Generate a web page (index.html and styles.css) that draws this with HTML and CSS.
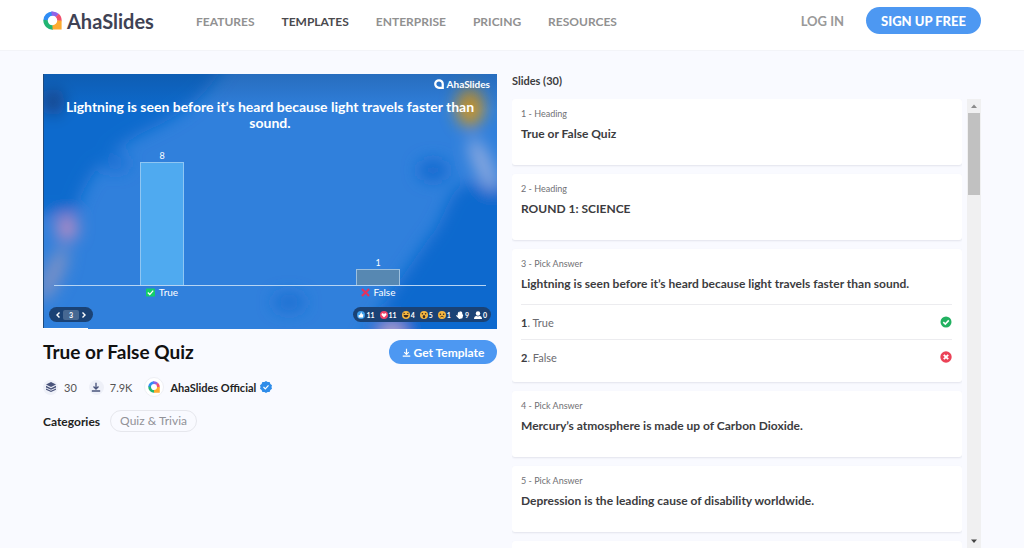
FILE: index.html
```html
<!DOCTYPE html>
<html lang="en">
<head>
<meta charset="utf-8">
<meta name="viewport" content="width=device-width, initial-scale=1">
<title>True or False Quiz - AhaSlides</title>
<link rel="stylesheet" href="styles.css">
</head>
<body>
<svg class="defs" aria-hidden="true">
  <symbol id="brand" viewBox="0 0 20 20">
    <path d="M10 2.700A7.300 7.300 0 0 0 2.700 10" stroke="#2f8df5" fill="none" stroke-width="4.600"/>
    <path d="M9 2.800A7.300 7.300 0 0 1 15.200 4.800" stroke="#8f63e8" fill="none" stroke-width="4.600"/>
    <path d="M15 4.600A7.300 7.300 0 0 1 17.300 10.500" stroke="#f0506e" fill="none" stroke-width="4.600"/>
    <path d="M2.700 9.500A7.300 7.300 0 0 0 10.500 17.300" stroke="#22b573" fill="none" stroke-width="4.600"/>
    <path d="M15 10H19.600V19.600H10V15A5 5 0 0 0 15 10Z" fill="#fdab2f"/>
  </symbol>
  <symbol id="download" viewBox="0 0 12 12">
    <path d="M6 1V8M3 5.500L6 8.500L9 5.500M1 10.800H11" fill="none" stroke="currentColor" stroke-width="1.600"/>
  </symbol>
</svg>

<header class="header">
  <a class="logo" href="#"><svg class="logo-mark" aria-hidden="true"><use href="#brand"/></svg>AhaSlides</a>
  <nav class="nav">
    <a href="#">FEATURES</a>
    <a href="#" class="active">TEMPLATES</a>
    <a href="#">ENTERPRISE</a>
    <a href="#">PRICING</a>
    <a href="#">RESOURCES</a>
  </nav>
  <div class="account">
    <a class="login" href="#">LOG IN</a>
    <button class="signup" type="button">SIGN UP FREE</button>
  </div>
</header>

<main class="main">
  <section class="template">
    <div class="preview">
      <svg class="backdrop" viewBox="0 0 454 255" preserveAspectRatio="none" aria-hidden="true">
        <defs>
          <filter id="soft" x="-50%" y="-50%" width="200%" height="200%"><feGaussianBlur stdDeviation="8"/></filter>
          <linearGradient id="shade" x1="0" y1="0" x2="0" y2="1"><stop offset="0" stop-color="#123c70" stop-opacity=".28"/><stop offset="1" stop-color="#123c70" stop-opacity="0"/></linearGradient>
        </defs>
        <rect width="454" height="255" fill="#3080dc"/>
        <g filter="url(#soft)">
          <path d="M-20-20H188C170 15 145 38 110 54C65 74 40 105 33 140H-20Z" fill="#096acd"/>
          <path d="M480 110H430C405 105 405 145 385 165C365 195 345 220 315 275H480Z" fill="#0b69ce"/>
          <ellipse cx="390" cy="96" rx="15" ry="11" fill="#126ad0"/>
          <ellipse cx="246" cy="228" rx="16" ry="9" fill="#1b70d2"/>
          <ellipse cx="73" cy="89" rx="13" ry="8" fill="#1c71d4"/>
          <ellipse cx="10" cy="28" rx="12" ry="14" fill="#18478e"/>
          <ellipse cx="427" cy="33" rx="14" ry="20" fill="#c8942a"/>
          <ellipse cx="440" cy="90" rx="9" ry="29" fill="#8aa8df" transform="rotate(-24 440 90)"/>
          <ellipse cx="24" cy="154" rx="11" ry="13" fill="#b08ac4"/>
          <ellipse cx="10" cy="200" rx="9" ry="30" fill="#7b91c6" transform="rotate(25 10 200)"/>
          <ellipse cx="349" cy="259" rx="13" ry="11" fill="#b4a4cc"/>
        </g>
        <rect width="454" height="36" fill="url(#shade)"/>
        <rect width="1" height="255" fill="#204a7c"/>
      </svg>
      <div class="slide">
        <div class="slide-brand">
          <svg viewBox="0 0 20 20" aria-hidden="true"><path d="M17.500 17.500H10A7.500 7.500 0 1 1 17.500 10Z" fill="none" stroke="#fff" stroke-width="4.500"/></svg>AhaSlides
        </div>
        <h2 class="question">Lightning is seen before it’s heard because light travels faster than sound.</h2>
        <div class="chart">
          <div class="column"><span>8</span><div class="bar bar-true"></div></div>
          <div class="column"><span>1</span><div class="bar bar-false"></div></div>
        </div>
        <div class="labels">
          <span><svg viewBox="0 0 10 10" aria-hidden="true"><rect y=".5" width="10" height="9" rx="1" fill="#13ce68"/><path d="M2 5L4.200 7.200L8 3" fill="none" stroke="#fff" stroke-width="1.400"/></svg>True</span>
          <span><svg viewBox="0 0 10 10" aria-hidden="true"><path d="M1 1L9 9M9 1L1 9" stroke="#e2335f" stroke-width="2.400"/></svg>False</span>
        </div>
        <div class="controls">
          <div class="pill pager">
            <button type="button" aria-label="Previous slide"><svg viewBox="0 0 6 8"><path d="M4.500 1.500L2 4L4.500 6.500" fill="none" stroke="#fff" stroke-width="1.400"/></svg></button>
            <span class="page">3</span>
            <button type="button" aria-label="Next slide"><svg viewBox="0 0 6 8"><path d="M1.500 1.500L4 4L1.500 6.500" fill="none" stroke="#fff" stroke-width="1.400"/></svg></button>
          </div>
          <div class="pill reactions">
            <span><svg viewBox="0 0 10 10"><circle cx="5" cy="5" r="5" fill="#3b9cea"/><path d="M2 5H3.500L5 2H6V4H8L7.500 8H2Z" fill="#fff"/></svg>11</span>
            <span><svg viewBox="0 0 10 10"><circle cx="5" cy="5" r="5" fill="#ed4269"/><path d="M5 8L2 5C1.400 3 4 2 5 4C6 2 8.600 3 8 5Z" fill="#fff"/></svg>11</span>
            <span><svg viewBox="0 0 10 10"><circle cx="5" cy="5" r="5" fill="#f4b63f"/><path d="M2 5H8C8 9 2 9 2 5ZM2 2L4 3.200L2 4M8 2L6 3.200L8 4" fill="#3b2a20"/></svg>4</span>
            <span><svg viewBox="0 0 10 10"><circle cx="5" cy="5" r="5" fill="#f4b63f"/><ellipse cx="5" cy="7" rx="1.500" ry="2" fill="#3b2a20"/><circle cx="3" cy="3.500" r="1" fill="#3b2a20"/><circle cx="7" cy="3.500" r="1" fill="#3b2a20"/></svg>5</span>
            <span><svg viewBox="0 0 10 10"><circle cx="5" cy="5" r="5" fill="#f4b63f"/><path d="M3 7.500Q5 5.500 7 7.500" fill="none" stroke="#3b2a20"/><circle cx="3" cy="4" r="1" fill="#3b2a20"/><circle cx="7" cy="4" r="1" fill="#3b2a20"/></svg>1</span>
            <span class="tight"><svg viewBox="0 0 10 10"><path d="M2 4L3 1L4 2L5 0L6 1L7.500 1L8 4L9 5L8 9L4 10L0 6L1 5L2.500 6Z" fill="#fff"/></svg>9</span>
            <span class="tight"><svg viewBox="0 0 10 10"><circle cx="5" cy="3" r="2.800" fill="#fff"/><path d="M0 10C0 6 3 5.500 5 7C7 5.500 10 6 10 10Z" fill="#fff"/></svg>0</span>
          </div>
        </div>
        <div class="progress"></div>
      </div>
    </div>

    <div class="title-row">
      <h1>True or False Quiz</h1>
      <button class="get" type="button"><svg aria-hidden="true"><use href="#download"/></svg>Get Template</button>
    </div>
    <div class="stats">
      <span class="stat"><i class="disc"><svg viewBox="0 0 12 12" aria-hidden="true"><path d="M6 0L12 3L6 6L0 3ZM0 4.600L6 7.400L12 4.600V6.500L6 9.300L0 6.500ZM0 7.800L6 10.500L12 7.800V9.400L6 12L0 9.400Z" fill="currentColor"/></svg></i>30</span>
      <span class="stat"><i class="disc"><svg aria-hidden="true"><use href="#download"/></svg></i>7.9K</span>
      <a class="author" href="#"><i class="avatar"><svg aria-hidden="true"><use href="#brand"/></svg></i>AhaSlides Official
        <svg class="verified" viewBox="0 0 12 12" aria-hidden="true"><path d="M6 0L7.600 1L9.600 1L10.400 2.900L12 4.200L11.500 6L12 7.800L10.400 9.100L9.600 11L7.600 11L6 12L4.400 11L2.400 11L1.600 9.100L0 7.800L.5 6L0 4.200L1.600 2.900L2.400 1L4.400 1Z" fill="#2e8ce9"/><path d="M3.500 6L5.300 7.800L8.500 4.300" fill="none" stroke="#fff" stroke-width="1.200"/></svg>
      </a>
    </div>
    <div class="categories"><span>Categories</span><a href="#">Quiz &amp; Trivia</a></div>
  </section>

  <section class="slides">
    <h2 class="slides-title">Slides (30)</h2>
    <div class="viewport">
      <div class="list">
        <article class="card"><p>1 - Heading</p><h3>True or False Quiz</h3></article>
        <article class="card"><p>2 - Heading</p><h3>ROUND 1: SCIENCE</h3></article>
        <article class="card"><p>3 - Pick Answer</p><h3>Lightning is seen before it’s heard because light travels faster than sound.</h3>
          <ul class="answers">
            <li><span><b>1</b>. True</span><svg viewBox="0 0 12 12" role="img" aria-label="Correct"><circle cx="6" cy="6" r="5.500" fill="#22b161"/><path d="M3.300 6.200L5.300 8.100L8.800 4.400" fill="none" stroke="#fff" stroke-width="1.600"/></svg></li>
            <li><span><b>2</b>. False</span><svg viewBox="0 0 12 12" role="img" aria-label="Incorrect"><circle cx="6" cy="6" r="5.700" fill="#eb4257"/><path d="M3.800 3.800L8.200 8.200M8.200 3.800L3.800 8.200" stroke="#fff" stroke-width="1.900"/></svg></li>
          </ul>
        </article>
        <article class="card"><p>4 - Pick Answer</p><h3>Mercury’s atmosphere is made up of Carbon Dioxide.</h3></article>
        <article class="card"><p>5 - Pick Answer</p><h3>Depression is the leading cause of disability worldwide.</h3></article>
        <article class="card"></article>
      </div>
      <div class="scrollbar" aria-hidden="true">
        <svg viewBox="0 0 14 14"><path d="M4 9L7 5.500L10 9Z" fill="#8b8b8b"/></svg>
        <div class="thumb"></div>
        <svg viewBox="0 0 14 14"><path d="M4 5.500L7 9L10 5.500Z" fill="#444"/></svg>
      </div>
    </div>
  </section>
</main>
</body>
</html>
```
FILE: styles.css
```css
* { box-sizing: border-box; }
body {
  margin: 0;
  height: 100vh;
  display: flex;
  flex-direction: column;
  overflow: hidden;
  background: #f9faff;
  color: #3c3c40;
  font-family: Lato, "Open Sans", sans-serif;
  font-size: 12px;
}
h1, h2, h3, p, ul { margin: 0; padding: 0; }
a { color: inherit; text-decoration: none; }
button { border: 0; padding: 0; font: inherit; color: #fff; cursor: pointer; }
svg { display: block; flex: none; }
.defs { position: absolute; width: 0; height: 0; }

.header {
  display: flex;
  align-items: center;
  height: 51px;
  padding: 0 43px 9px;
  background: #fff;
  border-bottom: 1px solid #f3f4f8;
  flex: none;
}
.logo {
  display: flex;
  align-items: center;
  gap: 5px;
  width: 153px;
  color: #3f4254;
  font-size: 20px;
  font-weight: 700;
}
.logo-mark { width: 19px; height: 19px; }
.nav { display: flex; gap: 27px; padding-top: 2px; color: #919191; font-size: 12px; font-weight: 700; }
.nav .active { color: #4a4a4e; }
.account { display: flex; align-items: center; gap: 22px; margin-left: auto; font-size: 13px; font-weight: 700; }
.login { color: #999; }
.signup { height: 27px; padding: 0 15px; border-radius: 14px; background: #4d98f2; font-weight: 900; }

.main {
  flex: 1;
  min-height: 0;
  display: grid;
  grid-template-columns: 454fr 469fr;
  gap: 15px;
  padding: 23px 43px 0;
}
.preview { display: grid; aspect-ratio: 16 / 9; overflow: hidden; color: #fff; }
.backdrop, .slide { grid-area: 1 / 1; width: 100%; height: 100%; min-height: 0; }
.slide { z-index: 1; display: flex; flex-direction: column; }
.slide-brand { display: flex; align-items: center; justify-content: flex-end; gap: 3px; height: 12px; margin: 4px 7px 0; font-size: 10px; font-weight: 700; }
.slide-brand svg { width: 10px; height: 10px; }
.question { margin: 9px 12px 0; font-size: 14px; line-height: 16px; text-align: center; }
.chart { flex: 1; min-height: 0; display: flex; margin: 0 11px; border-bottom: 1px solid #b6d5f4; }
.column { flex: 1; display: flex; flex-direction: column; align-items: center; justify-content: flex-end; font-size: 9px; line-height: 12px; }
.bar { width: 20%; border: 1px solid #8fc6f3; border-bottom: 0; }
.bar-true { height: 123px; background: #4faaf0; }
.bar-false { height: 16px; background: #5788b2; border-color: #9cc0df; }
.labels { display: flex; margin: 0 11px; font-size: 10px; line-height: 13px; }
.labels span { flex: 1; display: flex; align-items: center; justify-content: center; gap: 4px; }
.labels svg { width: 9px; height: 9px; }
.controls { display: flex; justify-content: space-between; margin: 8px 6px 6px; }
.pill { display: flex; align-items: center; height: 15px; padding: 0 6px; border-radius: 8px; background: #1a4275; font-size: 7px; font-weight: 700; }
.pager { gap: 2px; }
.pager button { background: none; }
.pager button svg { width: 6px; height: 8px; }
.page { width: 16px; height: 10px; line-height: 10px; border-radius: 2px; background: #466892; text-align: center; }
.reactions { gap: 5px; padding: 0 4px; }
.reactions span { display: flex; align-items: center; gap: 1px; }
.reactions svg { width: 8px; height: 8px; }
.progress { width: 10%; height: 1px; background: #fff; }

.title-row { display: flex; align-items: center; justify-content: space-between; margin-top: 11px; }
h1 { font-size: 19px; line-height: 24px; color: #111; }
.get { display: flex; align-items: center; justify-content: center; gap: 3px; width: 108px; height: 24px; border-radius: 12px; background: #4d98f2; font-weight: 700; }
.get svg { width: 9px; height: 9px; }
.stats { display: flex; align-items: center; gap: 12px; height: 22px; margin-top: 12px; font-size: 11px; color: #555; }
.stat { display: flex; align-items: center; gap: 6px; }
.disc { display: grid; place-items: center; width: 15px; height: 15px; border-radius: 50%; background: #eef0f8; color: #4a547b; }
.disc svg { width: 10px; height: 10px; }
.author { display: flex; align-items: center; gap: 4px; color: #222; font-weight: 700; }
.avatar { display: grid; place-items: center; width: 20px; height: 20px; margin-right: 2px; border: 1px solid #eeeff5; border-radius: 50%; background: #fff; }
.avatar svg { width: 12px; height: 12px; }
.verified { width: 12px; height: 12px; }
.categories { display: flex; align-items: center; gap: 10px; margin-top: 12px; color: #222; font-weight: 700; }
.categories a { height: 22px; padding: 0 9px; border: 1px solid #e6e7ed; border-radius: 11px; color: #929298; font-size: 12px; line-height: 20px; font-weight: 400; }

.slides { display: flex; flex-direction: column; min-height: 0; min-width: 0; }
.slides-title { height: 25px; font-size: 11px; line-height: 14px; }
.viewport { flex: 1; min-height: 0; display: flex; gap: 5px; }
.list { flex: 1; min-width: 0; display: flex; flex-direction: column; gap: 9px; overflow: hidden; }
.card { flex: none; min-height: 66px; padding: 8px 10px 8px 9px; border-radius: 3px; background: #fff; box-shadow: 0 1px 2px #e2e3ec; }
.card p { font-size: 9px; line-height: 14px; color: #707074; }
.card h3 { margin-top: 5px; font-size: 12px; line-height: 16px; }
.answers { margin-top: 12px; list-style: none; font-size: 11px; color: #6b6b70; }
.answers li { display: flex; align-items: center; justify-content: space-between; height: 35px; border-top: 1px solid #ececef; }
.answers b { color: #3c3c40; }
.answers svg { width: 12px; height: 12px; }
.scrollbar { display: flex; flex-direction: column; width: 14px; background: #f0f0f1; }
.scrollbar svg { width: 14px; height: 14px; }
.thumb { width: 12px; height: 82px; margin: 0 1px auto; background: #c1c1c1; }
```
